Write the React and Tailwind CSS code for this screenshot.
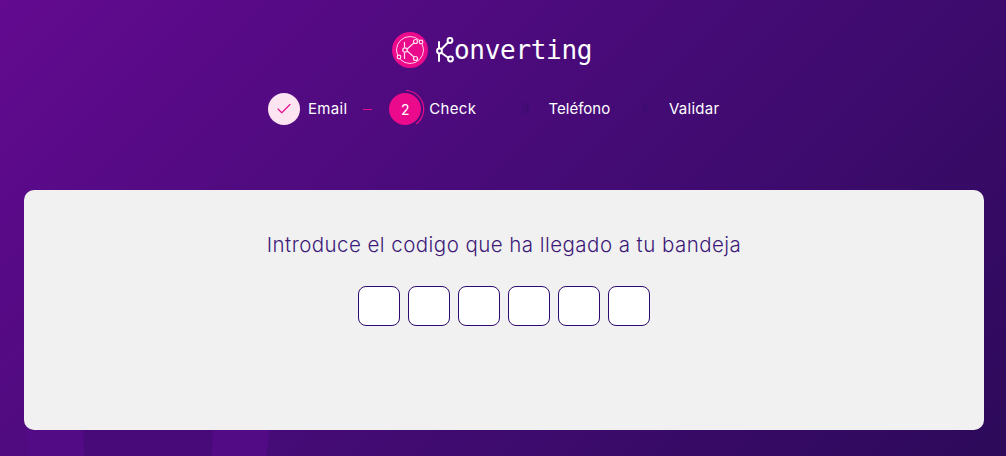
import React from 'react';
import { Check } from 'lucide-react';

const LogoMark = () => (
  <svg width="36" height="36" viewBox="0 0 36 36" fill="none" className="shrink-0">
    <circle cx="18" cy="18" r="18" fill="#ec0a8c" />
    <circle cx="18" cy="18" r="13.5" stroke="#ffd0e8" strokeWidth="1" />
    <g stroke="#ffe0f0" strokeWidth="1.2">
      <path d="M14 18 L23 10 M14 18 L23 26 M12.5 10 V15.5 M12.5 20.5 V27" />
      <circle cx="13" cy="18" r="2.2" fill="#ec0a8c" />
      <circle cx="23.5" cy="9.5" r="2" fill="#ec0a8c" />
      <circle cx="23.5" cy="26.5" r="2" fill="#ec0a8c" />
      <circle cx="7" cy="25" r="1.8" fill="#ec0a8c" />
      <circle cx="29" cy="10" r="1.8" fill="#ec0a8c" />
    </g>
  </svg>
);

const LogoK = () => (
  <svg width="18" height="26" viewBox="0 0 18 26" fill="none" className="shrink-0">
    <g stroke="#fff" strokeWidth="2" strokeLinecap="round">
      <path d="M3 5 V24 M5 12.5 L12 5.5 M5 15.5 L12.5 21" />
      <circle cx="3.5" cy="14" r="2.4" fill="#450b77" />
      <circle cx="14" cy="3.5" r="2.4" fill="#450b77" />
      <circle cx="14.5" cy="22" r="2.4" fill="#450b77" />
    </g>
  </svg>
);

const Logo = () => (
  <div className="flex items-center h-9 pl-[392px] self-start">
    <LogoMark />
    <div className="ml-[8px] flex items-center">
      <LogoK />
      <span
        className="text-[26px] leading-none text-white tracking-[-0.3px] font-['DejaVu_Sans_Mono']"
      >
        onverting
      </span>
    </div>
  </div>
);

const Steps = () => (
  <div className="mt-[23px] self-start pl-[268px] flex items-center h-[36px] text-[15px] text-white tracking-[0.3px] font-['Inter']">
    <div className="w-8 h-8 rounded-full bg-[#fde4f1] flex items-center justify-center">
      <Check size={18} strokeWidth={1.5} color="#ec0a8c" />
    </div>
    <span className="ml-2">Email</span>
    <div className="ml-[16px] w-[9px] h-px bg-[#ec0a8c]" />
    <div className="relative ml-[17px] w-8 h-8 rounded-full bg-[#ec0a8c] flex items-center justify-center text-[14px]">
      2
      <svg className="absolute top-[-4px] left-[-4px]" width="40" height="40" viewBox="0 0 40 40" fill="none">
        <path d="M21 1.5 A18.5 18.5 0 0 1 31 35" stroke="#ec0a8c" strokeWidth="1.2" />
      </svg>
    </div>
    <span className="ml-2">Check</span>
    <span className="ml-[45px] text-[13px] text-[#3a0b6e]">3</span>
    <span className="ml-[19px] tracking-normal">Teléfono</span>
    <span className="ml-[30px] text-[13px] text-[#3a0b6e]">4</span>
    <span className="ml-[20px]">Validar</span>
  </div>
);

const App = () => {
  return (
    <div className="relative h-[456px] w-[1006px] overflow-hidden bg-[linear-gradient(135deg,#630a90_0%,#450b76_50%,#2d0a5a_100%)]">
      {/* Soft shapes behind the card */}
      <div className="absolute left-[24px] top-[200px] w-[247px] h-[400px] rounded-[50%] bg-[#520a85]" />
      <div className="absolute left-[82px] top-[200px] w-[132px] h-[400px] rounded-[50%] bg-[#480a78]" />

      <div className="relative flex flex-col items-center pt-[32px]">
        <Logo />
        <Steps />
        <div className="mt-[63px] self-start ml-[24px] w-[960px] h-[240px] bg-[#f1f1f1] rounded-[10px] flex flex-col items-center">
          <p className="mt-[41px] text-[20.5px] leading-[28px] text-[#3d1a78] font-['Inter'] font-light tracking-[0.45px]">
            Introduce el codigo que ha llegado a tu bandeja
          </p>
          <div className="mt-[27px] flex gap-2">
            {[0, 1, 2, 3, 4, 5].map((i) => (
              <input
                key={i}
                type="text"
                maxLength={1}
                className="w-[42px] h-[40px] bg-white border border-[#2e0a6e] rounded-[8px] text-center"
              />
            ))}
          </div>
        </div>
      </div>
    </div>
  );
};

export default App;
